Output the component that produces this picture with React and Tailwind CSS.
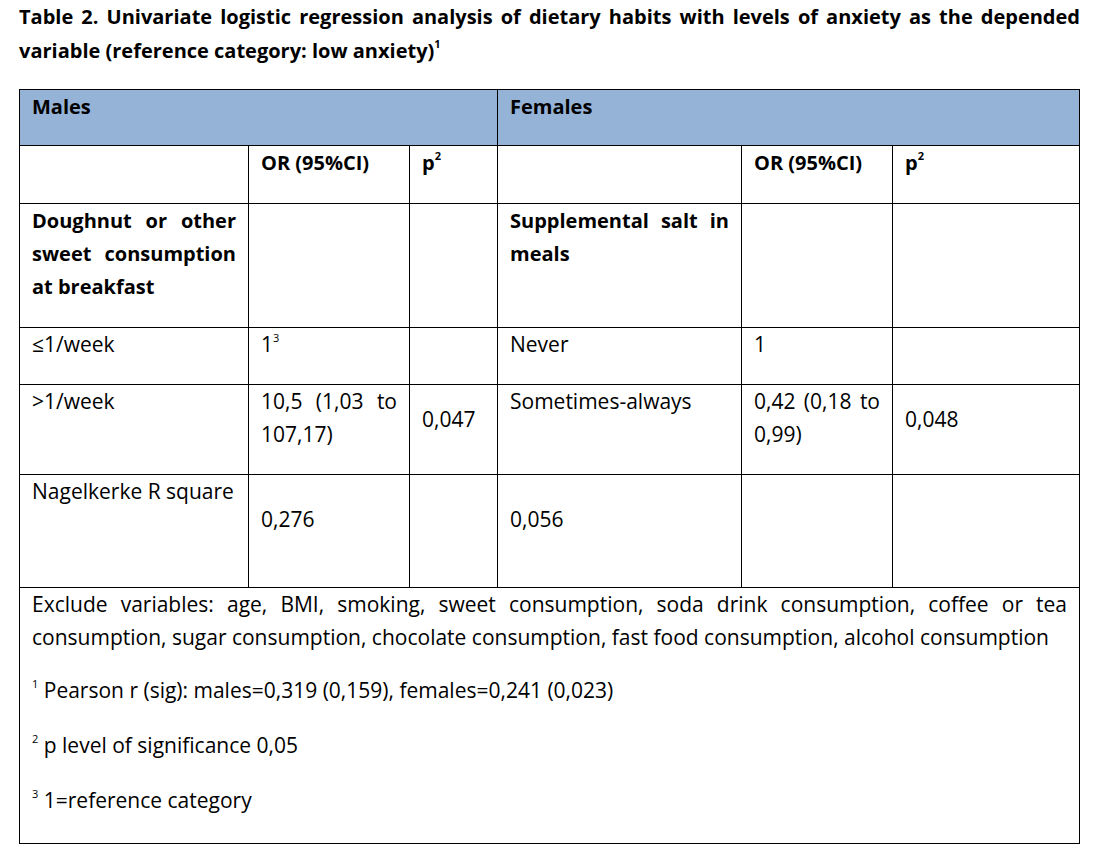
import React from 'react';

const font = { fontFamily: '"Open Sans", "Liberation Sans", sans-serif' };

// each line is placed by hand so the wrapping matches the printed table
const JLine = ({ children }) => (
  <div className="text-justify [text-align-last:justify]">{children}</div>
);

const Sup = ({ children }) => (
  <sup className="relative -top-[2px] text-[11px] align-super">{children}</sup>
);

const td = 'border border-black px-3 pt-0 pb-5 align-top';
const th = 'border border-black px-3 pt-0 pb-5 align-top font-bold text-[20px]';

export default function App() {
  return (
    <div className="w-[1108px] h-[855px] bg-white text-black overflow-hidden" style={font}>
      <div className="pl-[19px] pr-[28px] text-[20px] leading-[34px] font-bold">
        <JLine>
          Table 2. Univariate logistic regression analysis of dietary habits with levels of anxiety as the depended
        </JLine>
        <div>
          variable (reference category: low anxiety)<Sup>1</Sup>
        </div>
      </div>

      <table className="ml-[19px] mt-[21px] w-[1060px] table-fixed border-collapse text-[21px] leading-[33px]">
        <colgroup>
          <col className="w-[229px]" />
          <col className="w-[161px]" />
          <col className="w-[88px]" />
          <col className="w-[244px]" />
          <col className="w-[151px]" />
          <col className="w-[187px]" />
        </colgroup>
        <tbody>
          <tr className="h-[56px] bg-[#95b3d7]">
            <td colSpan={3} className={th}>Males</td>
            <td colSpan={3} className={th}>Females</td>
          </tr>
          <tr className="h-[58px]">
            <td className={th}></td>
            <td className={th}>OR (95%CI)</td>
            <td className={th}>
              p<Sup>2</Sup>
            </td>
            <td className={th}></td>
            <td className={th}>OR (95%CI)</td>
            <td className={th}>
              p<Sup>2</Sup>
            </td>
          </tr>
          <tr className="h-[124px]">
            <td className={th}>
              <JLine>Doughnut or other</JLine>
              <JLine>sweet consumption</JLine>
              <div>at breakfast</div>
            </td>
            <td className={td}></td>
            <td className={td}></td>
            <td className={th}>
              <JLine>Supplemental salt in</JLine>
              <div>meals</div>
            </td>
            <td className={td}></td>
            <td className={td}></td>
          </tr>
          <tr className="h-[57px]">
            <td className={td}>≤1/week</td>
            <td className={td}>
              1<Sup>3</Sup>
            </td>
            <td className={td}></td>
            <td className={td}>Never</td>
            <td className={td}>1</td>
            <td className={td}></td>
          </tr>
          <tr className="h-[90px]">
            <td className={td}>&gt;1/week</td>
            <td className={td}>
              <JLine>10,5 (1,03 to</JLine>
              <div>107,17)</div>
            </td>
            <td className={`${td} !align-middle`}>0,047</td>
            <td className={td}>Sometimes-always</td>
            <td className={td}>
              <JLine>0,42 (0,18 to</JLine>
              <div>0,99)</div>
            </td>
            <td className={`${td} !align-middle`}>0,048</td>
          </tr>
          <tr className="h-[113px]">
            <td className={td}>Nagelkerke R square</td>
            <td className={`${td} !align-middle !pb-6`}>0,276</td>
            <td className={td}></td>
            <td className={`${td} !align-middle !pb-6`}>0,056</td>
            <td className={td}></td>
            <td className={td}></td>
          </tr>
          <tr className="h-[256px]">
            <td colSpan={6} className="border border-black px-3 pt-0 align-top">
              <JLine>
                Exclude variables: age, BMI, smoking, sweet consumption, soda drink consumption, coffee or tea
              </JLine>
              <div className="mb-5">
                consumption, sugar consumption, chocolate consumption, fast food consumption, alcohol consumption
              </div>
              <div className="mb-[22px]">
                <Sup>1</Sup> Pearson r (sig): males=0,319 (0,159), females=0,241 (0,023)
              </div>
              <div className="mb-[22px]">
                <Sup>2</Sup> p level of significance 0,05
              </div>
              <div>
                <Sup>3</Sup> 1=reference category
              </div>
            </td>
          </tr>
        </tbody>
      </table>
    </div>
  );
}
